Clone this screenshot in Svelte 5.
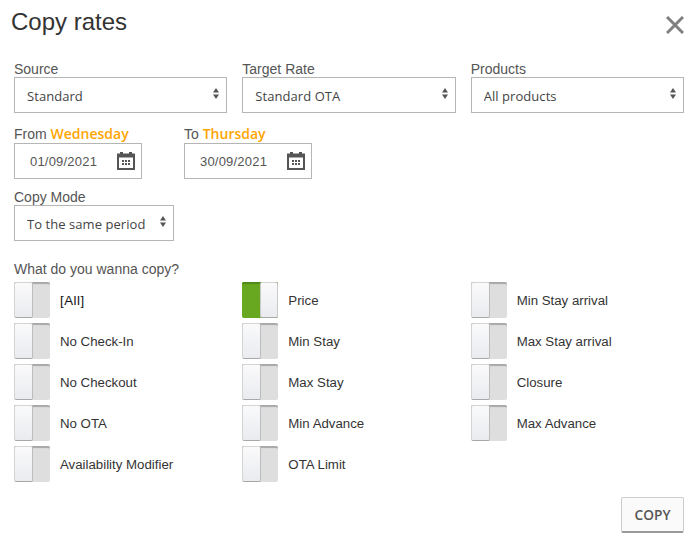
<script>
  const selects = [
    { label: "Source", value: "Standard" },
    { label: "Target Rate", value: "Standard OTA" },
    { label: "Products", value: "All products" }
  ];

  let options = $state([
    { name: "[All]", on: false, strong: true },
    { name: "Price", on: true },
    { name: "Min Stay arrival", on: false },
    { name: "No Check-In", on: false },
    { name: "Min Stay", on: false },
    { name: "Max Stay arrival", on: false },
    { name: "No Checkout", on: false },
    { name: "Max Stay", on: false },
    { name: "Closure", on: false },
    { name: "No OTA", on: false },
    { name: "Min Advance", on: false },
    { name: "Max Advance", on: false },
    { name: "Availability Modifier", on: false },
    { name: "OTA Limit", on: false }
  ]);
</script>

{#snippet picker(value)}
  <div class="select">
    <select>
      <option>{value}</option>
    </select>
    <svg class="arrows" width="6" height="11" viewBox="0 0 6 11">
      <path d="M3 0 6 4.500H0zM0 6.500h6L3 11z" fill="#555" />
    </svg>
  </div>
{/snippet}

{#snippet dateField(value)}
  <div class="date">
    <input type="text" {value} />
    <svg class="cal" width="18" height="18" viewBox="0 0 18 18">
      <path
        fill="#555"
        fill-rule="evenodd"
        d="M3 0h3v1.500h6V0h3v1.500h3V18H0V1.500h3zM2 5.500V16h14V5.500z"
      />
      <path
        fill="#555"
        d="M5 8h2v2H5zM8 8h2v2H8zM11 8h2v2h-2zM5 11h2v2H5zM8 11h2v2H8zM11 11h2v2h-2z"
      />
    </svg>
  </div>
{/snippet}

<div class="dialog">
  <header>
    <h1>Copy rates</h1>
    <button class="close" aria-label="Close">
      <svg width="18" height="18" viewBox="0 0 18 18">
        <path d="M1 1l16 16M17 1 1 17" stroke="#808080" stroke-width="3" fill="none" />
      </svg>
    </button>
  </header>

  <div class="row-three">
    {#each selects as s}
      <label class="field">
        <span>{s.label}</span>
        {@render picker(s.value)}
      </label>
    {/each}
  </div>

  <div class="row-dates">
    <div class="field">
      <span>From <b>Wednesday</b></span>
      {@render dateField("01/09/2021")}
    </div>
    <div class="field">
      <span>To <b>Thursday</b></span>
      {@render dateField("30/09/2021")}
    </div>
  </div>

  <label class="field mode">
    <span>Copy Mode</span>
    {@render picker("To the same period")}
  </label>

  <p class="question">What do you wanna copy?</p>
  <div class="toggles">
    {#each options as opt}
      <div class="option">
        <button
          class="toggle"
          class:on={opt.on}
          aria-label={opt.name}
          onclick={() => (opt.on = !opt.on)}
        >
          <i></i>
        </button>
        <span class:strong={opt.strong}>{opt.name}</span>
      </div>
    {/each}
  </div>

  <footer>
    <button class="copy">COPY</button>
  </footer>
</div>

<style>
  :global(body) {
    background: #fff;
  }
  .dialog {
    width: 696px;
    height: 546px;
    box-sizing: border-box;
    padding: 0 12px 0 14px;
    font-family: "Liberation Sans", Arial, sans-serif;
    color: #555;
    overflow: hidden;
  }
  header {
    display: flex;
    justify-content: space-between;
    height: 60px;
    margin-left: -3px;
  }
  h1 {
    margin: 5px 0 0;
    font: 400 24px/33px "Liberation Sans", Arial, sans-serif;
    color: #333;
  }
  .close {
    border: 0;
    background: none;
    padding: 0;
    margin: 16px 0 0 0;
    height: 18px;
    cursor: pointer;
  }
  .field {
    display: flex;
    flex-direction: column;
  }
  .field > span {
    display: block;
    height: 17px;
    font-size: 14px;
    line-height: 19px;
  }
  .field b {
    font: 600 14px/15px "Open Sans", sans-serif;
    color: #ffa500;
  }
  .row-three,
  .toggles {
    display: grid;
    grid-template-columns: repeat(3, 213.330px);
    column-gap: 15px;
  }
  .row-dates {
    display: flex;
    gap: 42px;
    margin-top: 13px;
  }
  .row-dates .field {
    width: 128px;
  }
  .row-dates .field > span {
    line-height: 15px;
  }
  .mode {
    width: 160px;
    margin-top: 9px;
  }
  .select,
  .date {
    position: relative;
    height: 36px;
  }
  select,
  input {
    width: 100%;
    height: 100%;
    box-sizing: border-box;
    border: 1px solid #b5b5b5;
    border-radius: 0;
    background: #fff;
    margin: 0;
    outline: 0;
  }
  select {
    appearance: none;
    padding: 2px 0 0 12px;
    font: 400 13px "Open Sans", sans-serif;
    letter-spacing: 0.060px;
    color: #444;
  }
  input {
    padding: 0 0 0 15px;
    font: 400 13px "Liberation Sans", Arial, sans-serif;
    letter-spacing: 0.200px;
    color: #555;
  }
  .arrows {
    position: absolute;
    right: 8px;
    top: 11px;
    pointer-events: none;
  }
  .cal {
    position: absolute;
    right: 7px;
    top: 9px;
    pointer-events: none;
  }
  .question {
    margin: 20px 0 0;
    font-size: 14px;
    line-height: 17px;
    height: 17px;
  }
  .toggles {
    row-gap: 5px;
    margin-top: 4px;
  }
  .option {
    display: flex;
    align-items: center;
    gap: 10px;
    height: 36px;
    font-size: 13.250px;
    color: #333;
  }
  .strong {
    letter-spacing: 0.500px;
    color: #111;
  }
  .toggle {
    position: relative;
    display: block;
    width: 36px;
    height: 36px;
    padding: 0;
    border: 0;
    border-radius: 2px;
    background: #dedede;
    box-shadow: inset 0 3px 1px -1px #a8a8a8;
    cursor: pointer;
    overflow: hidden;
  }
  .toggle i {
    position: absolute;
    left: 0;
    top: 0;
    width: 19px;
    height: 36px;
    box-sizing: border-box;
    border: 1px solid #d4d4d4;
    border-bottom-color: #a8a8a8;
    border-right: 1px solid #bcbcbc;
    border-radius: 2px;
    background: linear-gradient(#fafafb, #e9ebef);
  }
  .toggle.on {
    background: #68a820;
    box-shadow: inset 0 3px 1px -1px #4f8a18;
  }
  .toggle.on i {
    left: 18px;
    width: 18px;
    border-right: 1px solid #c9c9c9;
    border-left: 1px solid #c9c9c9;
  }
  footer {
    display: flex;
    justify-content: flex-end;
    margin-top: 15px;
  }
  .copy {
    width: 63px;
    height: 36px;
    padding: 0;
    border: 1px solid #ccc;
    border-bottom: 2px solid #999;
    border-radius: 2px;
    background: #fafafa;
    font: 600 13.700px "Open Sans", sans-serif;
    color: #555;
    cursor: pointer;
  }
</style>
